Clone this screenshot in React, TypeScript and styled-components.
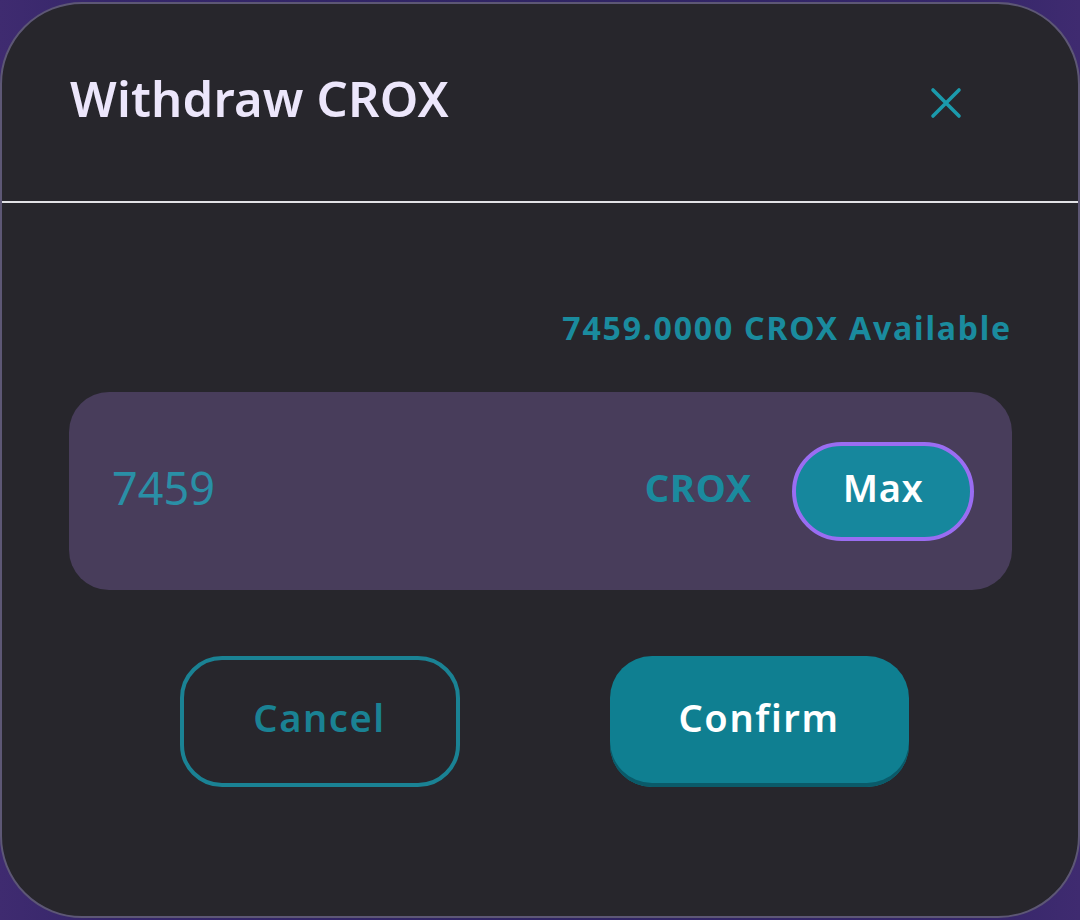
import React from "react";
import styled, { createGlobalStyle } from "styled-components";

const Global = createGlobalStyle`
  html, body { margin: 0; padding: 0; }
  body {
    width: 1080px;
    height: 920px;
    overflow: hidden;
    background: #3c2a6c;
    font-family: "Noto Sans", "Open Sans", sans-serif;
  }
`;

const Backdrop = styled.div`
  width: 1080px;
  height: 920px;
  background: linear-gradient(90deg, #3f2b70 0%, #35266a 10%, #2f2463 50%, #35266a 90%, #3f2b70 100%);
  display: flex;
  padding-top: 2px;
  box-sizing: border-box;
`;

const Modal = styled.div`
  width: 1080px;
  height: 916px;
  box-sizing: border-box;
  background: #27262c;
  border: 2px solid #5d5775;
  border-radius: 82px;
  display: flex;
  flex-direction: column;
  overflow: hidden;
`;

const Header = styled.div`
  height: 199px;
  box-sizing: border-box;
  padding: 0 114px 0 68px;
  display: flex;
  align-items: center;
  justify-content: space-between;
  border-bottom: 2px solid #e2e2e6;
`;

const Title = styled.h2`
  margin: 0;
  margin-top: -10px;
  font-size: 49px;
  font-weight: 600;
  color: #ece6fb;
  letter-spacing: 0.2px;
`;

const CloseButton = styled.button`
  background: none;
  border: none;
  padding: 0;
  width: 36px;
  height: 36px;
  display: flex;
  align-items: center;
  justify-content: center;
  cursor: pointer;
`;

const Body = styled.div`
  padding: 105px 66px 0 67px;
  display: flex;
  flex-direction: column;
`;

const Available = styled.div`
  align-self: flex-end;
  font-size: 32px;
  font-weight: 700;
  color: #1a8b9e;
  line-height: 40px;
  letter-spacing: 1.8px;
`;

const InputBox = styled.div`
  margin-top: 44px;
  height: 198px;
  box-sizing: border-box;
  background: #483d5b;
  border-radius: 40px;
  display: flex;
  align-items: center;
  padding: 0 38px 0 43px;
`;

const AmountInput = styled.input`
  flex: 1;
  min-width: 0;
  background: transparent;
  border: none;
  outline: none;
  font-family: "Noto Sans", sans-serif;
  font-size: 45px;
  font-weight: 400;
  color: #2a8fa6;
  padding: 0 0 8px 0;
`;

const Unit = styled.span`
  font-size: 38px;
  font-weight: 700;
  color: #1b8a9e;
  margin-right: 40px;
  letter-spacing: 0.8px;
  padding-bottom: 8px;
`;

const MaxButton = styled.button`
  width: 182px;
  height: 99px;
  box-sizing: border-box;
  border: 4px solid #9a6df2;
  border-radius: 50px;
  background: #16879d;
  color: #ffffff;
  font-family: "Noto Sans", sans-serif;
  font-size: 38px;
  font-weight: 600;
  letter-spacing: 0.5px;
  padding: 0 0 8px 0;
  cursor: pointer;
`;

const Actions = styled.div`
  margin-top: 66px;
  display: flex;
  justify-content: center;
  gap: 150px;
  padding-left: 7px;
`;

const ActionButton = styled.button<{ $primary?: boolean }>`
  height: 131px;
  width: ${(p) => (p.$primary ? "299px" : "280px")};
  box-sizing: border-box;
  border-radius: 42px;
  font-family: "Noto Sans", sans-serif;
  font-size: 38px;
  font-weight: 600;
  letter-spacing: 1.6px;
  padding: 0 0 10px 0;
  cursor: pointer;
  border: ${(p) => (p.$primary ? "none" : "4px solid #1a8294")};
  background: ${(p) => (p.$primary ? "#0f7f91" : "transparent")};
  color: ${(p) => (p.$primary ? "#ffffff" : "#1a8294")};
  box-shadow: ${(p) => (p.$primary ? "inset 0 -4px 0 #0a5a69" : "none")};
`;

export default function App() {
  return (
    <>
      <Global />
      <Backdrop>
        <Modal>
          <Header>
            <Title>Withdraw CROX</Title>
            <CloseButton aria-label="Close">
              <svg width="32" height="32" viewBox="0 0 32 32">
                <path
                  d="M3 3 L29 29 M29 3 L3 29"
                  stroke="#1b9aac"
                  strokeWidth="3.6"
                  strokeLinecap="round"
                />
              </svg>
            </CloseButton>
          </Header>
          <Body>
            <Available>7459.0000 CROX Available</Available>
            <InputBox>
              <AmountInput defaultValue="7459" />
              <Unit>CROX</Unit>
              <MaxButton>Max</MaxButton>
            </InputBox>
            <Actions>
              <ActionButton>Cancel</ActionButton>
              <ActionButton $primary>Confirm</ActionButton>
            </Actions>
          </Body>
        </Modal>
      </Backdrop>
    </>
  );
}
